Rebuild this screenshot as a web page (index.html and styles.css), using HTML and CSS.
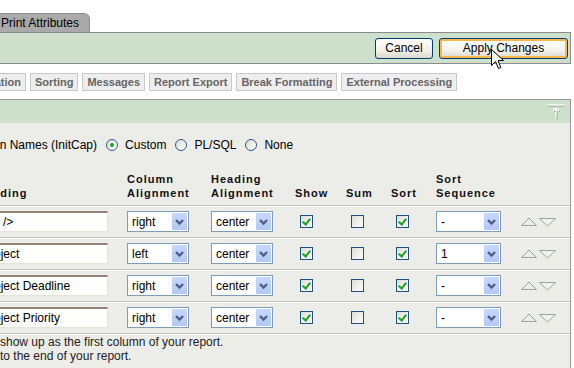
FILE: index.html
```html
<!DOCTYPE html>
<html lang="en">
<head>
    <meta charset="UTF-8">
    <title>Print Attributes</title>
    <link rel="stylesheet" href="styles.css">
</head>
<body>
    <div class="page">
        <div class="tabbar">
            <span class="tab">Print Attributes</span>
        </div>

        <div class="toolbar">
            <button class="button btn-cancel">Cancel</button>
            <button class="button btn-apply">Apply Changes</button>
        </div>

        <div class="subtabs">
            <a class="subtab first">Layout and Pagination</a>
            <a class="subtab">Sorting</a>
            <a class="subtab">Messages</a>
            <a class="subtab">Report Export</a>
            <a class="subtab">Break Formatting</a>
            <a class="subtab">External Processing</a>
        </div>

        <div class="region">
            <div class="region-head">
                <svg class="pin" width="20" height="18" viewBox="0 0 20 18">
                    <path d="M1 3h18" stroke="#8a9a8a" stroke-width="1"/>
                    <path d="M1 2h18" stroke="#fff" stroke-width="1.2"/>
                    <path d="M11 6v10M8 9l3-3 3 3" stroke="#8a9a8a" stroke-width="1" fill="none"/>
                    <path d="M10 5v10M7 8l3-3 3 3" stroke="#fff" stroke-width="1.2" fill="none"/>
                </svg>
            </div>
            <div class="region-body">
                <div class="names">
                    <span class="names-label">Column Names (InitCap)</span>
                    <input type="radio" name="headings" checked>
                    <span>Custom</span>
                    <input type="radio" name="headings">
                    <span>PL/SQL</span>
                    <input type="radio" name="headings">
                    <span>None</span>
                </div>

                <div class="grid grid-head">
                    <div>Heading</div>
                    <div>Column<br>Alignment</div>
                    <div>Heading<br>Alignment</div>
                    <div>Show</div>
                    <div>Sum</div>
                    <div>Sort</div>
                    <div>Sort<br>Sequence</div>
                    <div></div>
                </div>

                <div class="grid row">
                    <div><input class="text" type="text" value="<br />"></div>
                    <div class="select"><span>right</span><span class="arrow"><svg width="15" height="17" viewBox="0 0 15 17"><path d="M4 7l3.5 3.5L11 7" stroke="#4d6185" stroke-width="2.4" fill="none"/></svg></span></div>
                    <div class="select"><span>center</span><span class="arrow"><svg width="15" height="17" viewBox="0 0 15 17"><path d="M4 7l3.5 3.5L11 7" stroke="#4d6185" stroke-width="2.4" fill="none"/></svg></span></div>
                    <div><input class="check" type="checkbox" checked></div>
                    <div><input class="check" type="checkbox"></div>
                    <div><input class="check" type="checkbox" checked></div>
                    <div class="select select-seq"><span>-</span><span class="arrow"><svg width="15" height="17" viewBox="0 0 15 17"><path d="M4 7l3.5 3.5L11 7" stroke="#4d6185" stroke-width="2.4" fill="none"/></svg></span></div>
                    <div class="move"><svg width="36" height="10" viewBox="0 0 36 10"><path d="M0.5 8.5L8 1L15.5 8.5Z" stroke="#8fae8f" fill="#e6efe6"/><path d="M18.5 1.5H34.5L26.5 9Z" stroke="#8fae8f" fill="#eef3ee"/></svg></div>
                </div>

                <div class="grid row">
                    <div><input class="text" type="text" value="Project"></div>
                    <div class="select"><span>left</span><span class="arrow"><svg width="15" height="17" viewBox="0 0 15 17"><path d="M4 7l3.5 3.5L11 7" stroke="#4d6185" stroke-width="2.4" fill="none"/></svg></span></div>
                    <div class="select"><span>center</span><span class="arrow"><svg width="15" height="17" viewBox="0 0 15 17"><path d="M4 7l3.5 3.5L11 7" stroke="#4d6185" stroke-width="2.4" fill="none"/></svg></span></div>
                    <div><input class="check" type="checkbox" checked></div>
                    <div><input class="check" type="checkbox"></div>
                    <div><input class="check" type="checkbox" checked></div>
                    <div class="select select-seq"><span>1</span><span class="arrow"><svg width="15" height="17" viewBox="0 0 15 17"><path d="M4 7l3.5 3.5L11 7" stroke="#4d6185" stroke-width="2.4" fill="none"/></svg></span></div>
                    <div class="move"><svg width="36" height="10" viewBox="0 0 36 10"><path d="M0.5 8.5L8 1L15.5 8.5Z" stroke="#8fae8f" fill="#e6efe6"/><path d="M18.5 1.5H34.5L26.5 9Z" stroke="#8fae8f" fill="#eef3ee"/></svg></div>
                </div>

                <div class="grid row">
                    <div><input class="text" type="text" value="Project Deadline"></div>
                    <div class="select"><span>right</span><span class="arrow"><svg width="15" height="17" viewBox="0 0 15 17"><path d="M4 7l3.5 3.5L11 7" stroke="#4d6185" stroke-width="2.4" fill="none"/></svg></span></div>
                    <div class="select"><span>center</span><span class="arrow"><svg width="15" height="17" viewBox="0 0 15 17"><path d="M4 7l3.5 3.5L11 7" stroke="#4d6185" stroke-width="2.4" fill="none"/></svg></span></div>
                    <div><input class="check" type="checkbox" checked></div>
                    <div><input class="check" type="checkbox"></div>
                    <div><input class="check" type="checkbox" checked></div>
                    <div class="select select-seq"><span>-</span><span class="arrow"><svg width="15" height="17" viewBox="0 0 15 17"><path d="M4 7l3.5 3.5L11 7" stroke="#4d6185" stroke-width="2.4" fill="none"/></svg></span></div>
                    <div class="move"><svg width="36" height="10" viewBox="0 0 36 10"><path d="M0.5 8.5L8 1L15.5 8.5Z" stroke="#8fae8f" fill="#e6efe6"/><path d="M18.5 1.5H34.5L26.5 9Z" stroke="#8fae8f" fill="#eef3ee"/></svg></div>
                </div>

                <div class="grid row">
                    <div><input class="text" type="text" value="Project Priority"></div>
                    <div class="select"><span>right</span><span class="arrow"><svg width="15" height="17" viewBox="0 0 15 17"><path d="M4 7l3.5 3.5L11 7" stroke="#4d6185" stroke-width="2.4" fill="none"/></svg></span></div>
                    <div class="select"><span>center</span><span class="arrow"><svg width="15" height="17" viewBox="0 0 15 17"><path d="M4 7l3.5 3.5L11 7" stroke="#4d6185" stroke-width="2.4" fill="none"/></svg></span></div>
                    <div><input class="check" type="checkbox" checked></div>
                    <div><input class="check" type="checkbox"></div>
                    <div><input class="check" type="checkbox" checked></div>
                    <div class="select select-seq"><span>-</span><span class="arrow"><svg width="15" height="17" viewBox="0 0 15 17"><path d="M4 7l3.5 3.5L11 7" stroke="#4d6185" stroke-width="2.4" fill="none"/></svg></span></div>
                    <div class="move"><svg width="36" height="10" viewBox="0 0 36 10"><path d="M0.5 8.5L8 1L15.5 8.5Z" stroke="#8fae8f" fill="#e6efe6"/><path d="M18.5 1.5H34.5L26.5 9Z" stroke="#8fae8f" fill="#eef3ee"/></svg></div>
                </div>

                <p class="note">show up as the first column of your report.<br>to the end of your report.</p>
            </div>
        </div>

        <!-- mouse pointer over the Apply button -->
        <svg class="cursor" width="13" height="21" viewBox="0 0 13 21">
            <path d="M0.5 0.5V16.5L4.5 12.5L7.5 19.5L9.8 18.5L7 11.5H12.5Z" fill="#fff" stroke="#000" stroke-width="1"/>
        </svg>
    </div>
</body>
</html>
```

FILE: styles.css
```css
body {
    margin: 0;
    background: #fff;
    font-family: "Liberation Sans", Arial, sans-serif;
    font-size: 12px;
    color: #000;
}
.page {
    position: relative;
    width: 574px;
    height: 368px;
    overflow: hidden;
}

/* top tab */
.tabbar {
    height: 32px;
    display: flex;
    align-items: flex-end;
}
.tab {
    margin-left: -10px;
    padding: 0 10px;
    height: 18px;
    line-height: 18px;
    background: #aaaaaa;
    border: 1px solid #8e8e8e;
    border-bottom: none;
    border-radius: 0 6px 0 0;
}

/* button bar */
.toolbar {
    box-sizing: border-box;
    width: 571px;
    height: 32px;
    background: #cce0cc;
    border: 1px solid #8c8c8c;
    border-left: none;
    display: flex;
    justify-content: flex-end;
    align-items: center;
    gap: 6px;
    padding-right: 2px;
}
.button {
    box-sizing: border-box;
    height: 21px;
    padding: 0;
    font-family: "Liberation Sans", Arial, sans-serif;
    font-size: 12px;
    color: #000;
    background: linear-gradient(#ffffff, #f3f2ec 60%, #dcd8cc);
    border: 1px solid #003c74;
    border-radius: 3px;
}
.btn-cancel {
    width: 58px;
}
.btn-apply {
    width: 129px;
    box-shadow: inset 0 0 0 2px #f5b84c;
}

/* sub tabs */
.subtabs {
    margin-top: 9px;
    display: flex;
    gap: 4px;
    white-space: nowrap;
}
.subtab {
    display: block;
    height: 16px;
    line-height: 16px;
    padding: 0 4px;
    border: 1px solid #c8c8c8;
    background: #eeeeee;
    color: #666;
    font-size: 11px;
    font-weight: bold;
}
.subtab.first {
    margin-left: -102px;
}

/* region */
.region {
    box-sizing: border-box;
    width: 571px;
    margin-top: 8px;
    border-top: 1px solid #999;
    border-right: 1px solid #999;
}
.region-head {
    height: 23px;
    background: #cce0cc;
    display: flex;
    justify-content: flex-end;
    padding-right: 4px;
}
.pin {
    margin-top: 3px;
}
.region-body {
    background: #ecece9;
    padding: 12px 0 40px;
}

.names {
    height: 20px;
    display: flex;
    align-items: center;
    white-space: nowrap;
}
.names-label {
    margin-left: -35px;
}
.names input {
    appearance: none;
    width: 12px;
    height: 12px;
    margin: 0 7px 0 9px;
    border: 1px solid #2f5a8c;
    border-radius: 50%;
    background: linear-gradient(135deg, #dcdcd4, #ffffff);
    display: flex;
    align-items: center;
    justify-content: center;
}
.names input:checked::before {
    content: "";
    width: 4px;
    height: 4px;
    border-radius: 50%;
    background: #21a121;
}

/* columns table */
.grid {
    display: grid;
    grid-template-columns: 150px 84px 84px 51px 45px 45px 85px 44px;
    margin-left: -23px;
    border-bottom: 1px solid #c4c4c4;
    box-shadow: 0 1px 0 #fff;
}
.grid-head {
    padding: 17px 0 5px;
    align-items: end;
    font-size: 11px;
    font-weight: bold;
    letter-spacing: 1px;
    line-height: 14px;
    color: #111;
}
.row {
    height: 31px;
    align-items: center;
}
.text {
    box-sizing: border-box;
    width: 131px;
    height: 21px;
    margin: 0;
    padding: 0 3px;
    font-family: "Liberation Sans", Arial, sans-serif;
    font-size: 12px;
    color: #000;
    background: #fdfdfb;
    border: 1px solid #e6e4da;
    border-top: 2px solid #8a8678;
    border-left: 2px solid #8a8678;
    outline: none;
}
.select {
    box-sizing: border-box;
    width: 62px;
    height: 21px;
    border: 1px solid #7f9db9;
    background: #fff;
    display: flex;
    align-items: center;
    justify-content: space-between;
    padding: 0 1px 0 4px;
}
.select-seq {
    width: 65px;
}
.arrow {
    width: 15px;
    height: 17px;
    background: linear-gradient(#c8d8fc, #b2c8f8);
    border-radius: 1px;
    display: flex;
}
.check {
    appearance: none;
    width: 13px;
    height: 13px;
    margin: 0 0 0 5px;
    border: 1px solid #1c5180;
    background: linear-gradient(135deg, #dcdcd6, #ffffff);
    display: flex;
    justify-content: center;
}
.check:checked::before {
    content: "";
    width: 3px;
    height: 6px;
    margin-top: 1px;
    border-right: 2px solid #21a121;
    border-bottom: 2px solid #21a121;
    transform: rotate(40deg);
}
.move {
    display: flex;
    align-items: center;
}

.note {
    margin: 1px 0 0;
    line-height: 14px;
    color: #222;
}

.cursor {
    position: absolute;
    left: 491px;
    top: 49px;
}
```
